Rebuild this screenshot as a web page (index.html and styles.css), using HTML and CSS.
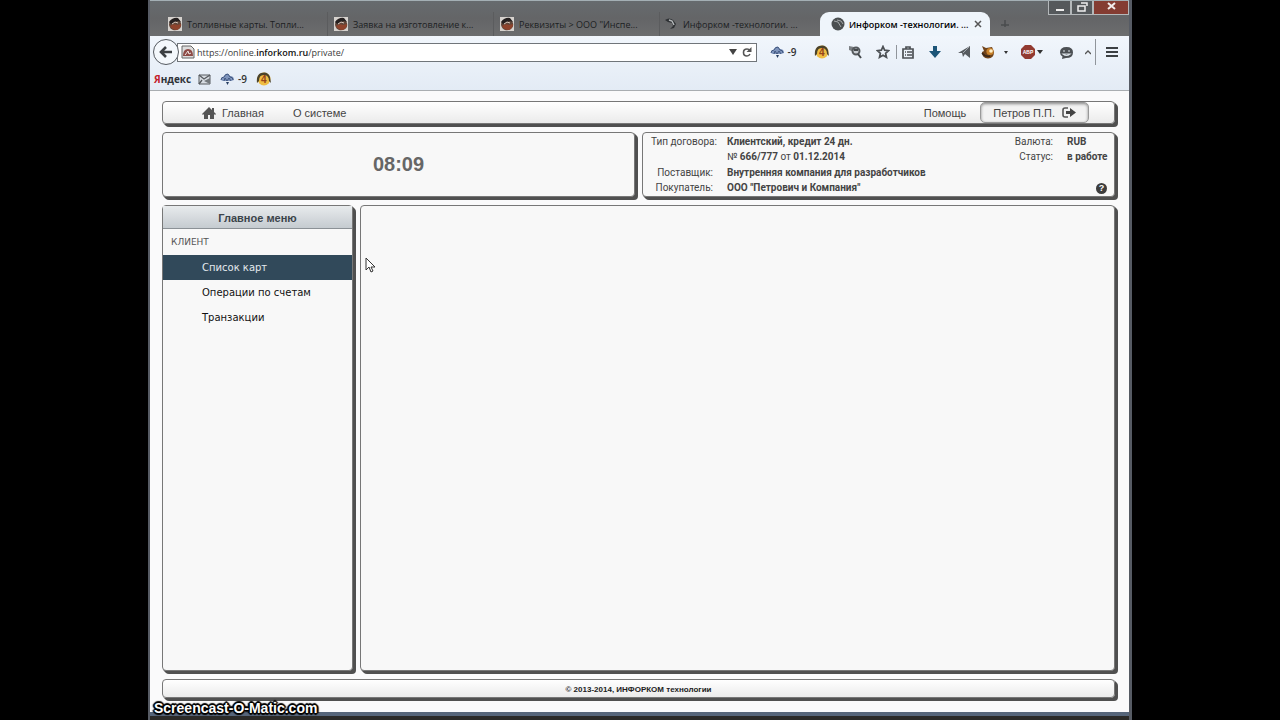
FILE: index.html
```html
<!DOCTYPE html>
<html lang="ru">
<head>
<meta charset="utf-8">
<title>Инфорком-технологии</title>
<link rel="stylesheet" href="styles.css">
</head>
<body>
<svg class="defs" aria-hidden="true">
  <symbol id="fav" viewBox="0 0 14 14"><rect width="14" height="14" fill="#d6d2ce"/><path d="M1 8q0-5 5-6t7 4q1 4-2 6t-6 1-4-5z" fill="#60463a"/><path d="M2 9q4-3 7-1l4-1q0 4-4 6-5 0-7-4z" fill="#8e432c"/><path d="M1 5q4-5 9-4l3 4-3-1-3 1-4 2z" fill="#252020"/><path d="M4 7l3-2 3 1" stroke="#d8c8bd" fill="none"/></symbol>
  <symbol id="swirl" viewBox="0 0 14 14"><path d="M1 3q4-3 8 0l3 4-2 4-4 1 3-3-1-3-4-1z" fill="#2e3134"/><path d="M5 3l3 1 2 4" stroke="#b4b8ba" stroke-width="1.500" fill="none"/></symbol>
  <symbol id="cloud" viewBox="0 0 14 14"><path d="M1 8q0-3 3-3 1-4 4-3l2 2q4 0 4 4l-3 1H3z" fill="#7d93bb"/><path d="M1 8q0-3 3-3 1-3 4-3l2 3q3 0 3 3M4 9l1-3 2 3 2-3 2 3" stroke="#40567f" fill="none"/><path d="M6 10h3l-1.500 3z" fill="#263d61"/></symbol>
  <symbol id="coin" viewBox="0 0 16 14"><circle cx="8" cy="7" r="6.500" fill="#efbd43"/><path d="M1 11Q0 3 5 1q7-2 9 4l1 6-2-2q0-5-4-6-6-1-6 6z" fill="#4b432b"/><text x="5" y="11" class="coin-text">4</text></symbol>
</svg>
<div class="window">
  <header class="titlebar">
    <div class="controls">
      <button class="ctl" aria-label="Свернуть"><svg width="21" height="14" viewBox="0 0 21 14"><path d="M7 9h8" stroke="#eee" stroke-width="2"/></svg></button>
      <button class="ctl" aria-label="Развернуть"><svg width="20" height="14" viewBox="0 0 20 14"><path d="M6 5h7v5H6zM9 2h6v3" stroke="#eee" stroke-width="1.500" fill="none"/></svg></button>
      <button class="ctl ctl-close" aria-label="Закрыть"><svg width="34" height="14" viewBox="0 0 34 14"><path d="M14 2l7 6M21 2l-7 6" stroke="#f2eceb" stroke-width="2"/></svg></button>
    </div>
    <nav class="tabs">
      <button class="tab"><svg class="fav"><use href="#fav"/></svg>Топливные карты. Топли...</button>
      <button class="tab"><svg class="fav"><use href="#fav"/></svg>Заявка на изготовление к...</button>
      <button class="tab"><svg class="fav"><use href="#fav"/></svg>Реквизиты &gt; ООО "Инспе...</button>
      <button class="tab tab-last"><svg class="fav"><use href="#swirl"/></svg>Инфорком -технологии. ...</button>
      <button class="tab tab-active"><svg class="fav" viewBox="0 0 14 14"><circle cx="7" cy="7" r="6.500" fill="#4b4f51"/><path d="M3 4l4 1 3 5M6 3l4 1 2 3" stroke="#a4a8a9" fill="none"/></svg><span class="tab-text">Инфорком -технологии. ...</span><svg width="8" height="8" viewBox="0 0 8 8"><path d="M1 1l6 6M7 1L1 7" stroke="#555" stroke-width="1.500"/></svg></button>
      <button class="newtab" aria-label="Новая вкладка"><svg width="10" height="10" viewBox="0 0 10 10"><path d="M5 1v7M1 6h8" stroke="#4a4c4e" stroke-width="1.500"/></svg></button>
    </nav>
  </header>
  <div class="chrome">
    <div class="navrow">
      <button class="back" aria-label="Назад"><svg width="14" height="14" viewBox="0 0 14 14"><path d="M7 2L2 7l5 5M2.500 7H13" stroke="#3c4043" stroke-width="2.600" fill="none"/></svg></button>
      <div class="url">
        <svg width="14" height="14" viewBox="0 0 14 14"><path d="M1 1h9l3 3v9H1z" fill="#ddd" stroke="#666"/><path d="M2 11q0-7 5-7t5 7z" fill="#8d4a45"/><path d="M4 10l3-4 1 3 2-1" stroke="#f0e6e4" fill="none"/></svg>
        <a class="address" href="#">https://online.<b>inforkom.ru</b>/private/</a>
        <svg width="8" height="6" viewBox="0 0 8 6"><path d="M0 0h8L4 6z" fill="#444"/></svg>
        <svg class="reload" width="10" height="10" viewBox="0 0 10 10"><path d="M8 3.500Q7 2 5 2 1.500 2 1.500 5.500T5 9q2 0 3-2" fill="none" stroke="#555" stroke-width="1.600"/><path d="M9.500 0v5h-5z" fill="#555"/></svg>
      </div>
      <div class="tools">
        <button class="tool w40"><svg width="14" height="14"><use href="#cloud"/></svg><span class="temp">-9</span></button>
        <button class="tool w38" aria-label="Яндекс"><svg width="16" height="14"><use href="#coin"/></svg></button>
        <button class="tool w28" aria-label="Поиск"><svg width="14" height="14" viewBox="0 0 14 14"><path d="M1 1l5 1v5L1 5z" fill="#7b7f83"/><circle cx="8" cy="6" r="3.500" fill="#c9cdd2" stroke="#54585c" stroke-width="2"/><path d="M6 5h4M10 9l3 4" stroke="#44484b" stroke-width="2"/></svg></button>
        <button class="tool w27" aria-label="Закладка"><svg width="14" height="14" viewBox="0 0 14 14"><path d="M7 1.500l1.600 3.700 4 .4-3 2.700.9 4L7 10.200l-3.500 2.100.9-4-3-2.700 4-.4z" fill="none" stroke="#4c5054" stroke-width="1.700"/></svg></button>
        <i class="sep"></i>
        <button class="tool w22" aria-label="Закладки"><svg width="12" height="13" viewBox="0 0 12 13"><path d="M1 3h10v9H1zM4 3V1h4v2" stroke="#4c5054" stroke-width="1.700" fill="none"/><path d="M3 6h1M5 6h5M3 9h1M5 9h5" stroke="#4c5054" stroke-width="1.500"/></svg></button>
        <button class="tool w32" aria-label="Загрузки"><svg width="12" height="12" viewBox="0 0 12 12"><path d="M4 0h4v5h4l-6 7-6-7h4z" fill="#1c5578"/></svg></button>
        <button class="tool w25" aria-label="Отправить"><svg width="12" height="14" viewBox="0 0 12 14"><path d="M12 1v12L7 9l-2 3-1-4H0z" fill="#575b5f"/><path d="M11 2L5 8" stroke="#a2a8ae"/></svg></button>
        <button class="tool w23" aria-label="Дополнение"><svg width="14" height="14" viewBox="0 0 14 14"><path d="M1 1l4 2 6-1 2 5q0 6-6 6.500Q1 13 1 7l2-1z" fill="#70431b"/><circle cx="9" cy="6.500" r="3.600" fill="#c9822b"/><circle cx="10" cy="6" r="1.800" fill="#fff0c9"/><path d="M1 8q3 4 8 3" stroke="#39271a" stroke-width="1.500" fill="none"/></svg></button>
        <button class="tool w14" aria-label="Ещё"><svg width="4" height="3" viewBox="0 0 4 3"><path d="M0 0h4L2 3z" fill="#333"/></svg></button>
        <button class="tool w38 abp"><svg width="14" height="14" viewBox="0 0 14 14"><path d="M4 0h6l4 4v6l-4 4H4l-4-4V4z" fill="#923a31"/><text x="7" y="9" text-anchor="middle" class="abp-text">ABP</text></svg><svg width="6" height="4" viewBox="0 0 6 4"><path d="M0 0h6L3 4z" fill="#333"/></svg></button>
        <button class="tool w30" aria-label="Чат"><svg width="13" height="13" viewBox="0 0 13 13"><path d="M6.500 1Q13 1 13 6.500T6 12l-4 1 .5-2.500Q0 9 0 6.500 0 1 6.500 1z" fill="#4c5054"/><path d="M3 5h2M8 5h2M3 8q3.500 3 7 0z" stroke="#dce2e8" stroke-width="1.200" fill="none"/></svg></button>
        <button class="tool w14" aria-label="Свернуть панель"><svg width="6" height="5" viewBox="0 0 6 5"><path d="M0 4l3-3 3 3" stroke="#555" stroke-width="1.300" fill="none"/></svg></button>
        <i class="sep sep-tall"></i>
        <button class="tool w32" aria-label="Меню"><svg width="12" height="10" viewBox="0 0 12 10"><path d="M0 1h12M0 5h12M0 9h12" stroke="#3c4043" stroke-width="2"/></svg></button>
      </div>
    </div>
    <div class="bookmarks">
      <a class="yandex" href="#"><span class="ya">Я</span>ндекс</a>
      <svg width="13" height="12" viewBox="0 0 13 12"><path d="M1 2h11v9H1z" fill="#d7dce2" stroke="#565a5e"/><path d="M1 2l5 4 6-4M1 11l3-4" stroke="#565a5e" stroke-width="1.300" fill="none"/><path d="M12 11V5L6 8z" fill="#74797d"/></svg>
      <span class="weather"><svg width="14" height="14"><use href="#cloud"/></svg><span class="temp">-9</span></span>
      <svg width="16" height="14"><use href="#coin"/></svg>
    </div>
  </div>
  <div class="page">
    <nav class="panel topnav">
      <a class="home" href="#"><svg width="14" height="12" viewBox="0 0 14 12"><path d="M0 7l7-7 3 3V1h2v4l2 2-1 1-1-1v5H8V8H6v4H2V7L1 8z" fill="#555"/></svg>Главная</a>
      <a href="#">О системе</a>
      <a class="help" href="#">Помощь</a>
      <button class="user">Петров П.П.<svg width="14" height="11" viewBox="0 0 14 11"><path d="M6 1H3Q1 1 1 3v5q0 2 2 2h3" stroke="#555" stroke-width="1.600" fill="none"/><path d="M4 4h4V1l6 4.500L8 10V7H4z" fill="#444"/></svg></button>
    </nav>
    <div class="info">
      <section class="panel clock">08:09</section>
      <section class="panel contract">
        <dl class="deal">
          <dt>Тип договора:</dt><dd>Клиентский, кредит 24 дн.</dd>
          <dt></dt><dd><span class="light">№</span> 666/777 <span class="light">от</span> 01.12.2014</dd>
          <dt>Поставщик:</dt><dd>Внутренняя компания для разработчиков</dd>
          <dt>Покупатель:</dt><dd>ООО "Петрович и Компания"</dd>
        </dl>
        <div class="side">
          <dl class="state"><dt>Валюта:</dt><dd>RUB</dd><dt>Статус:</dt><dd>в работе</dd></dl>
          <button class="q" aria-label="Справка">?</button>
        </div>
      </section>
    </div>
    <div class="work">
      <aside class="panel menu">
        <h2 class="menu-title">Главное меню</h2>
        <h3 class="menu-group">КЛИЕНТ</h3>
        <a class="item item-on" href="#">Список карт</a>
        <a class="item" href="#">Операции по счетам</a>
        <a class="item" href="#">Транзакции</a>
      </aside>
      <main class="panel canvas"></main>
    </div>
    <footer class="panel foot">© 2013-2014, ИНФОРКОМ технологии</footer>
  </div>
  <div class="sill"></div>
  <svg class="cursor" width="10" height="16" viewBox="0 0 10 16"><path d="M1 1v12l3-3 2 5 2-1-2-4h4z" fill="#fff" stroke="#333"/></svg>
  <div class="mark">Screencast-O-Matic.com</div>
</div>
</body>
</html>
```
FILE: styles.css
```css
* { box-sizing: border-box; }
body { margin: 0; min-height: 100vh; display: flex; background: #000; font-family: "Liberation Sans", Arial, sans-serif; }
button { border: 0; margin: 0; padding: 0; background: none; font: inherit; color: inherit; }
a { color: inherit; text-decoration: none; }
svg { flex: none; display: block; }
dl, dd, h2, h3 { margin: 0; }
.defs { position: absolute; width: 0; height: 0; }
.coin-text { font: bold 10px "Liberation Sans", sans-serif; fill: #96431b; }
.abp-text { font: bold 5px "Liberation Sans", sans-serif; fill: #fff; }

.window { position: relative; flex: 1; min-width: 0; margin: 0 148px; display: flex; flex-direction: column; border: solid #565b64; border-width: 0 3px 0 2px; background: #fafafb; }

.titlebar { position: relative; height: 36px; display: flex; align-items: flex-end; background: linear-gradient(#666b6e, #646567 50%, #6c6d6e); border-top: 1px solid #a3afb4; }
.controls { position: absolute; top: 0; right: 0; display: flex; }
.ctl { height: 14px; border: 1px solid #b4b8ba; border-top: 0; background: #55595c; overflow: hidden; }
.ctl-close { width: 36px; background: #843c32; }
.tabs { flex: 1; display: flex; align-items: flex-end; padding-left: 12px; }
.tab { width: 166px; height: 24px; display: flex; align-items: center; gap: 5px; padding-left: 6px; font: 9px "Open Sans", sans-serif; color: #1c1e22; white-space: nowrap; border-right: 1px solid #5b5c5e; }
.tab-last { width: 160px; border: 0; padding-left: 4px; }
.tab-active { width: 170px; gap: 4px; padding-left: 11px; font-weight: 600; color: #000; background: #eff5fb; border: 0; border-radius: 9px 9px 0 0; }
.tab-text { width: 121px; text-align: left; }
.fav { width: 14px; height: 14px; }
.newtab { height: 24px; padding: 0 10px; }

.chrome { height: 55px; background: linear-gradient(#f1f6fc, #e3ebf5); border-bottom: 1px solid #a9adb1; }
.navrow { height: 32px; display: flex; align-items: center; padding-left: 3px; }
.back { position: relative; width: 26px; height: 26px; display: grid; place-items: center; border: 1px solid #555a60; border-radius: 50%; background: #f4f8fc; }
.url { flex: 1; min-width: 0; height: 19px; display: flex; align-items: center; padding: 0 4px 0 3px; margin-left: -2px; border: 1px solid #70757a; background: #fff; }
.address { flex: 1; margin-left: 2px; font: 9px "Open Sans", sans-serif; color: #3a3a3a; }
.address b { font-weight: 600; color: #111; }
.reload { margin-left: 5px; }
.tools { display: flex; align-items: center; padding: 0 1px 0 6px; }
.tool { height: 26px; display: flex; align-items: center; justify-content: center; gap: 4px; }
.temp { font: 600 10px "Open Sans", sans-serif; color: #333; }
.w14 { width: 14px; } .w22 { width: 22px; } .w23 { width: 23px; } .w25 { width: 25px; } .w27 { width: 27px; }
.w28 { width: 28px; } .w30 { width: 30px; } .w32 { width: 32px; } .w38 { width: 38px; } .w40 { width: 40px; }
.abp { gap: 2px; }
.sep { width: 1px; height: 14px; background: #90959b; }
.sep-tall { height: 26px; }
.bookmarks { height: 22px; display: flex; align-items: center; gap: 9px; padding-left: 4px; }
.yandex { width: 35px; font: bold 10px "Open Sans", sans-serif; color: #2f3338; }
.ya { color: #c4202a; }
.weather { display: flex; align-items: center; gap: 4px; }

.page { flex: 1; display: flex; flex-direction: column; gap: 8px; padding: 10px 14px 14px 12px; color: #444; }
.panel { border: 1px solid #777; border-radius: 4px; background: #f8f8f8; box-shadow: 1px 1px 0 #505050, 2px 2px 0 #505050, 3px 3px 0 #505050; }
.topnav { height: 23px; display: flex; align-items: center; padding: 0 25px 0 39px; font-size: 11px; background: linear-gradient(#fff, #ebebeb); }
.home { display: flex; align-items: center; gap: 6px; margin-right: 29px; }
.help { margin-left: auto; margin-right: 14px; }
.user { height: 21px; display: flex; align-items: center; gap: 7px; padding: 0 12px; border: 1px solid #999; border-radius: 5px; background: #f2f2f2; box-shadow: inset 0 1px 3px #888; }
.info { display: grid; grid-template-columns: 1fr 1fr; gap: 7px; height: 65px; }
.clock { display: grid; place-items: center; font-size: 20px; font-weight: bold; color: #666; }
.contract { display: flex; justify-content: space-between; padding: 1px 7px 1px 8px; font-size: 10px; line-height: 15px; white-space: nowrap; font-family: Roboto, "Liberation Sans", sans-serif; }
.contract dd { font-weight: bold; }
.contract dt { text-align: right; }
.deal { display: grid; grid-template-columns: 62px auto; column-gap: 14px; align-content: space-between; }
.state { display: grid; grid-template-columns: auto 40px; column-gap: 14px; }
.light { font-weight: normal; }
.side { display: flex; flex-direction: column; justify-content: space-between; align-items: flex-end; padding-bottom: 1px; }
.q { width: 11px; height: 11px; border-radius: 50%; background: #3d3d3d; color: #fff; font: bold 9px/11px "Liberation Sans", sans-serif; }
.work { flex: 1; display: flex; gap: 7px; }
.menu { width: 191px; }
.menu-title { height: 23px; border-bottom: 1px solid #8b9196; background: linear-gradient(#e8ebed, #c5cbd0); font: bold 11px/24px "Liberation Sans", sans-serif; text-align: center; color: #3b444b; }
.menu-group { height: 26px; padding-left: 8px; font: 9px/27px "DejaVu Sans", sans-serif; color: #555; }
.item { display: block; height: 25px; padding-left: 39px; font: 10px/25px "DejaVu Sans", sans-serif; color: #111; }
.item-on { background: #31495a; color: #e4eaee; }
.canvas { flex: 1; }
.foot { height: 19px; font: bold 8px/20px "Liberation Sans", sans-serif; text-align: center; color: #222; background: linear-gradient(#fff, #ebebeb); }
.sill { height: 8px; background: #2b2a28; border-top: 4px solid #56657a; }
.cursor { position: absolute; left: 215px; top: 257px; }
.mark { position: absolute; left: 4px; bottom: 4px; font: bold 14px/16px "Liberation Sans", sans-serif; color: #fff; text-shadow: -1px -1px 1px #000, 1px -1px 1px #000, -1px 1px 1px #000, 1px 1px 1px #000, 0 2px 1px #000, 2px 0 1px #000, -2px 0 1px #000, 0 -2px 1px #000; }
```
